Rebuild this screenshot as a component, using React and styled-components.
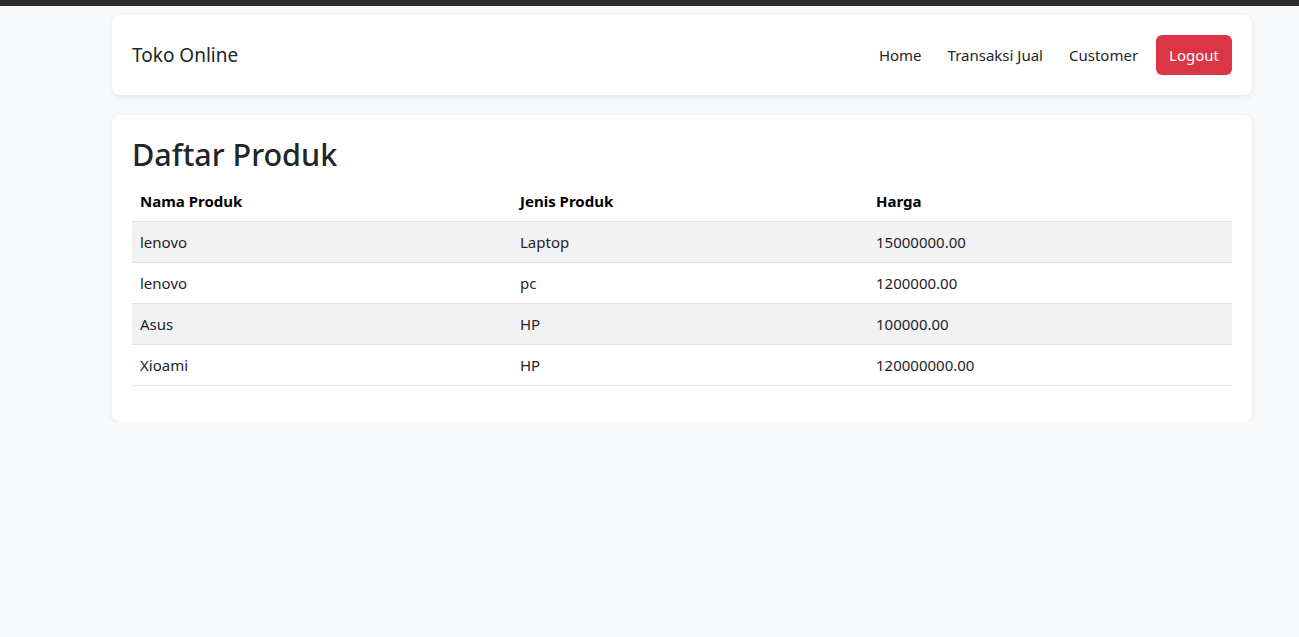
import React from 'react';
import styled, { createGlobalStyle } from 'styled-components';

const GlobalStyle = createGlobalStyle`
    html, body {
        margin: 0;
        padding: 0;
        background-color: #f8f9fa;
        font-family: 'Noto Sans', 'Open Sans', sans-serif;
        font-size: 16px;
        color: #212529;
    }
    * {
        box-sizing: border-box;
    }`

const TopStrip = styled.div`
    height: 6px;
    background-color: #2b2b2b;`

const Page = styled.div`
    width: 1140px;
    margin-left: 112px;
    padding-top: 9px;
    display: flex;
    flex-direction: column;
    gap: 20px;`

const Card = styled.div`
    background-color: #ffffff;
    border-radius: 8px;
    box-shadow: 0 2px 6px rgba(0, 0, 0, 0.08);
    padding: 20px;`

const NavBar = styled(Card)`
    display: flex;
    align-items: center;
    justify-content: space-between;`

const Brand = styled.span`
    font-size: 19px;
    color: #212529;`

const NavLinks = styled.nav`
    display: flex;
    align-items: center;
    gap: 10px;`

const NavLink = styled.a`
    padding: 8px;
    font-size: 15px;
    color: #212529;
    text-decoration: none;
    cursor: pointer;`

const LogoutButton = styled.button`
    height: 40px;
    padding: 0 13px;
    border: 0;
    border-radius: 6px;
    background-color: #dc3545;
    color: #ffffff;
    font-family: inherit;
    font-size: 15px;
    cursor: pointer;`

const Title = styled.h2`
    margin: 0 0 8px;
    font-size: 30.5px;
    font-weight: 500;
    line-height: 38.4px;`

const Table = styled.table`
    width: 100%;
    border-collapse: collapse;
    margin-bottom: 16px;
    font-size: 15px;`

const HeadCell = styled.th`
    text-align: left;
    padding: 8px;
    line-height: 24px;
    font-weight: 700;
    color: #000000;
    border-bottom: 1px solid #dee2e6;
    width: ${p => p.$w};`

const Row = styled.tr`
    background-color: ${p => (p.$striped ? '#f2f2f2' : '#ffffff')};`

const Cell = styled.td`
    padding: 8px;
    line-height: 24px;
    border-bottom: 1px solid #dee2e6;`

const produk = [
    { nama: 'lenovo', jenis: 'Laptop', harga: '15000000.00' },
    { nama: 'lenovo', jenis: 'pc', harga: '1200000.00' },
    { nama: 'Asus', jenis: 'HP', harga: '100000.00' },
    { nama: 'Xioami', jenis: 'HP', harga: '120000000.00' },
];

const App = () => {
    return (
        <>
            <GlobalStyle />
            <TopStrip />
            <Page>
                <NavBar>
                    <Brand>Toko Online</Brand>
                    <NavLinks>
                        <NavLink>Home</NavLink>
                        <NavLink>Transaksi Jual</NavLink>
                        <NavLink>Customer</NavLink>
                        <LogoutButton>Logout</LogoutButton>
                    </NavLinks>
                </NavBar>

                <Card>
                    <Title>Daftar Produk</Title>
                    <Table>
                        <thead>
                            <tr>
                                <HeadCell $w="380px">Nama Produk</HeadCell>
                                <HeadCell $w="356px">Jenis Produk</HeadCell>
                                <HeadCell>Harga</HeadCell>
                            </tr>
                        </thead>
                        <tbody>
                            {produk.map((item, i) => (
                                <Row key={i} $striped={i % 2 === 0}>
                                    <Cell>{item.nama}</Cell>
                                    <Cell>{item.jenis}</Cell>
                                    <Cell>{item.harga}</Cell>
                                </Row>
                            ))}
                        </tbody>
                    </Table>
                </Card>
            </Page>
        </>
    );
}

export default App;
